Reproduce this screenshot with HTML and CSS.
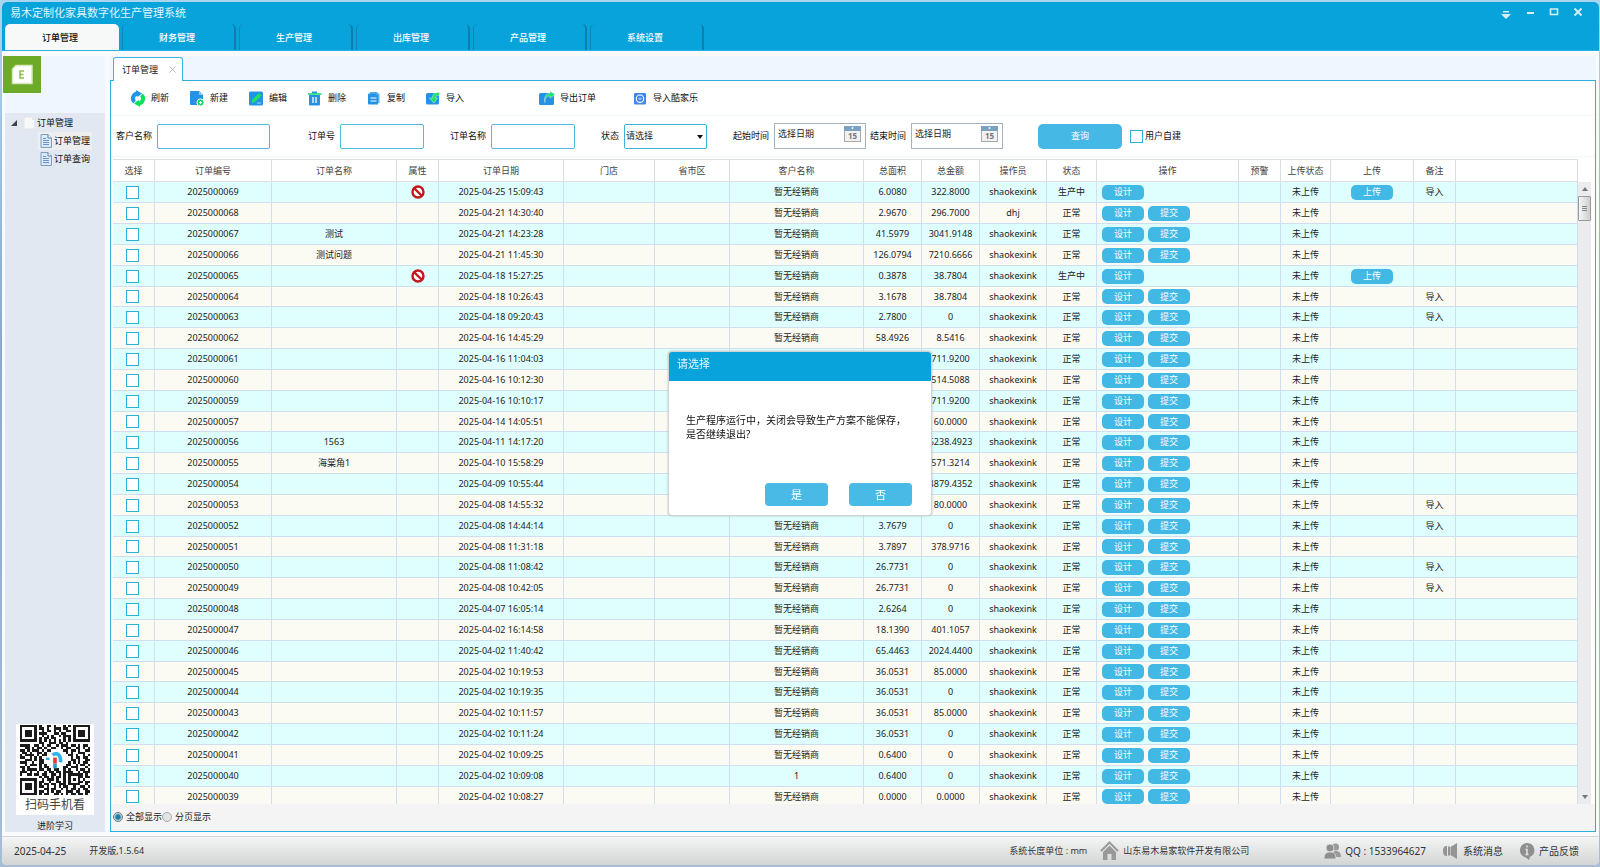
FILE: index.html
```html
<!DOCTYPE html>
<html lang="zh-CN">
<head>
<meta charset="utf-8">
<title>易木定制化家具数字化生产管理系统</title>
<link rel="stylesheet" href="styles.css">
</head>
<body>
<div class="window">
  <header class="top">
    <div class="titlebar">
      <h1 class="title">易木定制化家具数字化生产管理系统</h1>
      <div class="wincontrols">
        <button aria-label="菜单"><svg width="12" height="14" viewBox="0 0 12 14"><path d="M3 5h6v1.500H3zM1 8h10L6 13z" fill="#d5f0fb"/></svg></button>
        <button aria-label="最小化"><svg width="12" height="12" viewBox="0 0 12 12"><path d="M3 6h7v2H3z" fill="#d5f0fb"/></svg></button>
        <button aria-label="最大化"><svg width="12" height="12" viewBox="0 0 12 12"><path d="M2.500 3h7v5.500h-7z" fill="none" stroke="#d5f0fb" stroke-width="1.600"/></svg></button>
        <button aria-label="关闭"><svg width="12" height="12" viewBox="0 0 12 12"><path d="M2.500 2.500l7 7M9.500 2.500l-7 7" stroke="#d5f0fb" stroke-width="1.800"/></svg></button>
      </div>
    </div>
    <nav class="maintabs">
      <button class="maintab active">订单管理</button>
      <button class="maintab">财务管理</button>
      <button class="maintab">生产管理</button>
      <button class="maintab">出库管理</button>
      <button class="maintab">产品管理</button>
      <button class="maintab">系统设置</button>
    </nav>
  </header>

  <div class="work">
    <aside class="side">
      <div class="logo"><svg width="38" height="38" viewBox="0 0 38 38"><path d="M13 9.500h16v18H9.500V13z" fill="#fff" stroke="#d5e8bb" stroke-width="1.500"/><path d="M21 15h-4v7h4M17 18.500h3.500" fill="none" stroke="#8cbf4b" stroke-width="1.500"/></svg></div>
      <div class="sidebody">
        <ul class="tree">
          <li class="root"><svg width="6" height="6" viewBox="0 0 6 6"><path d="M6 0v6H0z" fill="#444"/></svg><svg width="13" height="14" viewBox="0 0 13 14"><path d="M1 1h8l3 3v9H1z" fill="#f8f8f8" stroke="#e2e4e6"/><path d="M9 1v3h3" fill="#e6e6e6"/></svg>订单管理</li>
          <li class="leaf selected"><svg width="12" height="14" viewBox="0 0 12 14"><path d="M1 .5h7l3.500 3.500v9.500H1z" fill="#dbe8f8" stroke="#7f9fb9"/><path d="M8 .5V4h3.500" fill="#fff" stroke="#56809f"/><path d="M3 4.500h3M3 6.500h6M3 8.500h6M3 10.500h6" stroke="#6b96c8"/></svg>订单管理</li>
          <li class="leaf"><svg width="12" height="14" viewBox="0 0 12 14"><path d="M1 .5h7l3.500 3.500v9.500H1z" fill="#dbe8f8" stroke="#7f9fb9"/><path d="M8 .5V4h3.500" fill="#fff" stroke="#56809f"/><path d="M3 4.500h3M3 6.500h6M3 8.500h6M3 10.500h6" stroke="#6b96c8"/></svg>订单查询</li>
        </ul>
        <div class="qrcard">
          <svg class="qr" id="qr" viewBox="0 0 29 29" shape-rendering="crispEdges"></svg>
          <div class="qrtext">扫码手机看</div>
        </div>
        <a class="learn" href="#">进阶学习</a>
      </div>
    </aside>

    <main class="main">
      <div class="pagetabs">
        <div class="pagetab">订单管理<button class="tabclose" aria-label="关闭标签"><svg width="7" height="7" viewBox="0 0 7 7"><path d="M.5.5l6 6M6.500.5l-6 6" stroke="#b9b9b9"/></svg></button></div>
      </div>
      <section class="panel">
        <div class="toolbar">
          <button class="tool"><svg width="16" height="17" viewBox="0 0 16 17"><path d="M8 3.500a5 5 0 0 0-3.500 8.600" fill="none" stroke="#2196e6" stroke-width="4"/><path d="M6 0l6 3.500-5 4z" fill="#2196e6"/><path d="M8 13.500a5 5 0 0 0 3.500-8.600" fill="none" stroke="#0fe05c" stroke-width="4"/><path d="M10 17l-6-3.500 5-4z" fill="#0fe05c"/><path d="M5.500 9l2-1.500 1 2 2-2" fill="none" stroke="#fff" stroke-width="1.500"/></svg>刷新</button>
          <button class="tool"><svg width="16" height="17" viewBox="0 0 16 17"><path d="M2 1h8l4 4v9a1 1 0 0 1-1 1H2a1 1 0 0 1-1-1V2a1 1 0 0 1 1-1z" fill="#2493e6"/><path d="M10 1v4h4z" fill="#8ac7f5"/><circle cx="11.500" cy="12.500" r="3.600" fill="#17dc63" stroke="#fff"/><path d="M11.500 11v3M10 12.500h3" stroke="#fff"/></svg>新建</button>
          <button class="tool"><svg width="16" height="17" viewBox="0 0 16 17"><rect x="1" y="1.500" width="14" height="14" rx="1.500" fill="#2493e6"/><path d="M3.500 13l1-3.500 6.500-6.500 2.500 2.500L7 12z" fill="#19e463"/><path d="M9 13h4" stroke="#9ad0f6"/></svg>编辑</button>
          <button class="tool"><svg width="16" height="17" viewBox="0 0 16 17"><path d="M2 5h11v9.500a1 1 0 0 1-1 1H3a1 1 0 0 1-1-1z" fill="#2493e6"/><path d="M5 1.500h5v2H5z" fill="#2493e6"/><path d="M1 4h13.500" stroke="#12dd66" stroke-width="1.500"/><path d="M6 7v6M9 7v6" stroke="#fff" stroke-width="1.300"/></svg>删除</button>
          <button class="tool"><svg width="16" height="17" viewBox="0 0 16 17"><path d="M4 2h7l2.500 2.500v8.500H4z" fill="#58aeea"/><path d="M3 3.500h6.500L12 6v8.500H3a1 1 0 0 1-1-1v-9a1 1 0 0 1 1-1z" fill="#2493e6"/><path d="M4.500 8h6M4.500 11h6" stroke="#fff" stroke-width="1.200"/></svg>复制</button>
          <button class="tool"><svg width="16" height="17" viewBox="0 0 16 17"><rect x="1" y="3" width="13" height="11.500" rx="1.500" fill="#2493e6"/><path d="M14.500 2.500c-4.500 0-7 1-7 5.500H4.500l4.500 5 3.500-5h-2c0-2 1-3 4-3z" fill="#19e463" stroke="#fff" stroke-width=".4"/></svg>导入</button>
          <button class="tool export"><svg width="16" height="17" viewBox="0 0 16 17"><rect x="0" y="3" width="15" height="12" rx="1.500" fill="#2493e6"/><path d="M6 12.500c0-5 2-6.500 5-6.500v2l5-3.500L11 1v2.500C7 3.500 4.500 7 6 12.500z" fill="#19e463" stroke="#fff" stroke-width=".4"/></svg>导出订单</button>
          <button class="tool kujiale"><svg width="16" height="17" viewBox="0 0 16 17"><rect x="2" y="3" width="12" height="11.500" rx="1" fill="#4287ee"/><circle cx="8" cy="8.700" r="3.700" fill="none" stroke="#fff" stroke-width="1.100"/><path d="M6.500 8l1.500 1.500L9.500 8" fill="none" stroke="#fff"/></svg>导入酷家乐</button>
        </div>
        <form class="filter">
          <label for="cust">客户名称</label><input class="txt wide" id="cust" type="text">
          <label class="gap-a" for="ono">订单号</label><input class="txt" id="ono" type="text">
          <label class="gap-b" for="oname">订单名称</label><input class="txt" id="oname" type="text">
          <label class="gap-b" for="state">状态</label>
          <span class="selwrap"><select id="state"><option>请选择</option></select><svg width="6" height="4" viewBox="0 0 6 4"><path d="M0 0h6L3 4z" fill="#111"/></svg></span>
          <label class="gap-b" for="d1">起始时间</label>
          <span class="date"><input id="d1" type="text" value="选择日期"><svg width="17" height="16" viewBox="0 0 17 16"><rect x=".5" y=".5" width="16" height="15" fill="#f2f2f2" stroke="#a9a9a9"/><path d="M0 0h17v5H0z" fill="#7ca0c0"/><circle cx="8.500" cy="2" r="1" fill="#fff"/><text x="8.500" y="13" text-anchor="middle">15</text></svg></span>
          <label class="gap-c" for="d2">结束时间</label>
          <span class="date"><input id="d2" type="text" value="选择日期"><svg width="17" height="16" viewBox="0 0 17 16"><rect x=".5" y=".5" width="16" height="15" fill="#f2f2f2" stroke="#a9a9a9"/><path d="M0 0h17v5H0z" fill="#7ca0c0"/><circle cx="8.500" cy="2" r="1" fill="#fff"/><text x="8.500" y="13" text-anchor="middle">15</text></svg></span>
          <button class="query" type="button">查询</button>
          <input class="check" id="own" type="checkbox"><label class="own" for="own">用户自建</label>
        </form>
        <div class="gridarea">
          <table class="grid">
            <colgroup><col class="w42"><col class="w117"><col class="w125"><col class="w42"><col class="w125"><col class="w91"><col class="w75"><col class="w134"><col class="w58"><col class="w58"><col class="w67"><col class="w50"><col class="w142"><col class="w42"><col class="w50"><col class="w83"><col class="w42"><col></colgroup>
            <thead><tr><th>选择</th><th>订单编号</th><th>订单名称</th><th>属性</th><th>订单日期</th><th>门店</th><th>省市区</th><th>客户名称</th><th>总面积</th><th>总金额</th><th>操作员</th><th>状态</th><th>操作</th><th>预警</th><th>上传状态</th><th>上传</th><th>备注</th><th></th></tr></thead>
            <tbody id="rows"></tbody>
          </table>
          <div class="scroll">
            <svg class="arrow" width="6" height="4" viewBox="0 0 6 4"><path d="M0 4h6L3 0z" fill="#777"/></svg>
            <div class="thumb"></div>
            <svg class="arrow down" width="6" height="4" viewBox="0 0 6 4"><path d="M0 0h6L3 4z" fill="#777"/></svg>
          </div>
        </div>
        <div class="modes">
          <input type="radio" name="mode" id="m1" checked><label for="m1">全部显示</label>
          <input type="radio" name="mode" id="m2"><label for="m2">分页显示</label>
        </div>
      </section>
    </main>
  </div>

  <footer class="status">
    <span class="num">2025-04-25</span>
    <span class="ver">开发版,1.5.64</span>
    <span class="unit">系统长度单位 : mm</span>
    <span class="item"><svg width="19" height="20" viewBox="0 0 19 20"><path d="M1 10l8.500-8.500L18 10" fill="none" stroke="#9a9a9a" stroke-width="2"/><path d="M3 11l6.500-6.500L16 11v8h-4.500v-6h-4v6H3z" fill="#999"/></svg>山东易木易家软件开发有限公司</span>
    <span class="item qq"><svg width="17" height="16" viewBox="0 0 17 16"><circle cx="11.500" cy="4" r="3.500" fill="#9a9a9a"/><path d="M8 14c0-4 1-6 4-6s5 2 5 6z" fill="#9a9a9a"/><circle cx="6" cy="5" r="4" fill="#8e8e8e" stroke="#eee" stroke-width=".7"/><path d="M0 16c0-5 2-7 6-7s6 2 6 7z" fill="#8e8e8e" stroke="#eee" stroke-width=".7"/></svg><span>QQ : 1533964627</span></span>
    <a class="item msg" href="#"><svg width="17" height="16" viewBox="0 0 17 16"><path d="M5 3v10C2 13 1 11 1 8s1-5 4-5zM6 3.500h2v9H6zM8.500 4L15 0v16l-6.500-4z" fill="#949494"/></svg>系统消息</a>
    <a class="item fb" href="#"><svg width="16" height="17" viewBox="0 0 16 17"><path d="M8 0a7.200 7.200 0 0 1 3 13.800L10 17l-3-2.500A7.300 7.300 0 0 1 8 0z" fill="#8f8f8f"/><path d="M8 2.500v2M6.500 6.500H8v5M6.500 11.500h3" stroke="#e8e8e8" stroke-width="1.400" fill="none"/></svg>产品反馈</a>
  </footer>
</div>

<dialog class="ask" open aria-labelledby="askt">
  <h2 id="askt">请选择</h2>
  <p>生产程序运行中，关闭会导致生产方案不能保存，<br>是否继续退出?</p>
  <div class="askbtns"><button>是</button><button>否</button></div>
</dialog>
<script src="app.js"></script>
</body>
</html>
```
FILE: styles.css
```css
* { box-sizing: border-box; }
body {
  margin: 0;
  height: 100vh;
  overflow: hidden;
  padding: 2px 1px 2px 2px;
  background: linear-gradient(#a9d6ee, #8aa9cc 40%, #a9bdd6);
  font: 9px/12px "Noto Sans", "Noto Sans CJK SC", sans-serif;
  color: #222;
}
button, input, select { font: inherit; color: inherit; margin: 0; }
button { border: 0; padding: 0; background: none; cursor: pointer; }
a { color: inherit; text-decoration: none; }
svg { flex: none; }
.window { display: flex; flex-direction: column; height: 100%; background: #f9fafb; border-radius: 5px; overflow: hidden; }

/* Title bar and main tabs */
.top { background: #09a3dc; border-bottom: 1px solid #2ab2e3; }
.titlebar { display: flex; justify-content: space-between; height: 22px; padding: 0 15px 0 8px; }
.title { margin: 0; padding-top: 3px; font-size: 11px; line-height: 16px; font-weight: 400; color: #e0f5fd; }
.wincontrols { display: flex; gap: 12px; padding-top: 4px; }
.wincontrols button { height: 12px; width: 12px; }
.wincontrols svg { display: block; }
.maintabs { display: flex; gap: 3px; padding-left: 3px; }
.maintab { width: 114px; height: 26px; padding: 2px 3px 0 0; font-weight: 500; color: #fff; border: 1px solid #0995c9; border-width: 0 2px 0 1px; border-color: transparent #0b7ead transparent #0b86b6; border-radius: 5px 5px 0 0; }
.maintab.active { background: #f7f9f9; border-color: transparent; color: #111; }

.work { flex: 1; min-height: 0; display: flex; gap: 5px; padding: 5px 3px 4px 3px; }

/* Sidebar */
.side { width: 100px; flex: none; display: flex; flex-direction: column; background: #eff6ff; }
.logo { width: 38px; height: 37px; margin: 0 0 20px -2px; background: #6caa28; }
.sidebody { flex: 1; display: flex; flex-direction: column; align-items: center; background: #e1e8f2; }
.tree { list-style: none; margin: 0; padding: 1px 0 0; width: 100%; font-size: 9px; }
.tree li { display: flex; align-items: center; gap: 2px; height: 18px; color: #111; }
.tree .root { gap: 6px; padding-left: 6px; }
.tree .root svg + svg { margin-right: -5px; }
.tree .leaf { width: 54px; margin-left: 33px; padding-left: 2px; }
.tree .selected { background: #eeeeef; }
.qrcard { margin-top: auto; width: 78px; background: #fff; text-align: center; padding-top: 1px; }
.qr { display: block; width: 70px; height: 70px; margin: 0 auto; }
.qrtext { font-size: 12px; line-height: 20px; color: #444; }
.learn { padding-top: 5px; }

/* Content panel */
.main { flex: 1; min-width: 0; display: flex; flex-direction: column; background: #eff6ff; }
.pagetabs { display: flex; height: 24px; padding: 1px 0 0 3px; }
.pagetab { display: flex; align-items: center; gap: 11px; width: 70px; height: 24px; padding-left: 8px; border: 1px solid #3db5e0; border-bottom: 0; border-radius: 3px 3px 0 0; background: #fff; position: relative; z-index: 1; }
.tabclose { display: flex; }
.panel { flex: 1; min-height: 0; display: flex; flex-direction: column; border: 1px solid #2bb0de; background: #fff; }
.toolbar { display: flex; align-items: center; height: 35px; padding-left: 19px; border-bottom: 1px solid #eff6fc; flex: none; }
.tool { display: flex; align-items: center; gap: 5px; width: 59px; height: 24px; white-space: nowrap; color: #111; }
.tool svg { width: 16px; }
.export { margin-left: 55px; width: 93px; }
.kujiale { width: 80px; }
.filter { display: flex; align-items: center; height: 41px; margin: 0; padding-left: 5px; border-bottom: 1px solid #eff6fc; flex: none; white-space: nowrap; }
.filter label { margin-right: 5px; color: #111; }
.txt { width: 84px; height: 25px; border: 1px solid #4fb9de; border-radius: 2px; background: #fff; }
.txt.wide { width: 113px; }
.filter .gap-a { margin-left: 38px; }
.filter .gap-b { margin-left: 26px; }
.filter .gap-c { margin-left: 4px; }
.selwrap { position: relative; }
.selwrap select { display: block; width: 83px; height: 25px; padding: 0 1px; appearance: none; border: 1px solid #3db3dc; border-radius: 2px; background: #fff; }
.selwrap svg { position: absolute; right: 4px; top: 11px; pointer-events: none; }
.date { display: flex; align-items: flex-start; width: 92px; height: 26px; padding: 2px 4px 0 3px; border: 1px solid #a8b2be; background: #fff; }
.date input { flex: 1; min-width: 0; height: 15px; padding: 0; border: 0; background: none; }
.date text { font: bold 8px "Noto Sans", sans-serif; fill: #777; }
.query { width: 84px; height: 25px; margin: 0 8px 0 35px; border-radius: 5px; background: #46b8e6; color: #fff; }
.check { appearance: none; display: block; width: 13px; height: 13px; border: 1px solid #2eb0dc; background: #fff; }
.filter .own { margin-left: 2px; }

/* Order grid */
.gridarea { flex: 1; min-height: 0; display: flex; margin: 2px 4px 0 2px; overflow: hidden; }
.grid { flex: 1; table-layout: fixed; border-collapse: separate; border-spacing: 0; height: min-content; width: 0; text-align: center; }
.grid th { height: 23px; padding: 0; border: 1px solid #dcdfe2; border-width: 1px 1px 1px 0; font-weight: 400; color: #444; }
.grid td { height: 21px; padding: 0; border: 1px solid #d0dff0; border-width: 0 1px 1px 0; white-space: nowrap; overflow: hidden; }
.grid tr:nth-child(6n) td { height: 20px; }
.grid tbody tr:nth-child(odd) { background: #dfffff; }
.grid tbody tr:nth-child(even) { background: #fcfbf3; }
.grid .check { margin: 0 auto 0 13px; }
.grid td svg { display: block; margin: 0 auto; }
.ops { display: flex; gap: 4px; padding-left: 5px; }
.pill { display: block; width: 42px; height: 15px; line-height: 14px; border-radius: 5px; background: #42b8e5; color: #fff; }
.upload { margin: 0 auto; }
.w42 { width: 42px; } .w50 { width: 50px; } .w58 { width: 58px; } .w67 { width: 67px; }
.w75 { width: 75px; } .w83 { width: 83px; } .w91 { width: 91px; } .w117 { width: 117px; }
.w125 { width: 125px; } .w134 { width: 134px; } .w142 { width: 142px; }
.scroll { width: 13px; flex: none; display: flex; flex-direction: column; align-items: center; margin-top: 23px; background: #ececee; }
.arrow { margin: 5px 0; }
.arrow.down { margin-top: auto; }
.thumb { width: 13px; height: 25px; border: 1px solid #999; border-radius: 1px; background: repeating-linear-gradient(#888 0 1px, transparent 1px 2px) center / 5px 6px no-repeat, linear-gradient(90deg, #f5f5f5, #cfcfcf); }
.modes { display: flex; align-items: center; height: 27px; padding: 0 0 2px 2px; background: #f4f4f4; flex: none; }
.modes input { appearance: none; width: 10px; height: 10px; border: 1px solid #aaa; border-radius: 50%; background: #e4e4e4; }
.modes input:checked { background: radial-gradient(#1c7fa8 0 2px, #dfe9ee 4px); border-color: #777; }
.modes label { margin-left: 3px; }

/* Status bar */
.status { display: flex; align-items: center; height: 29px; flex: none; padding: 0 20px 0 12px; border-top: 1px solid #d2d4d5; background: linear-gradient(#f4f5f5, #d3d5d5); color: #333; }
.num, .qq, .msg, .fb { font-size: 10px; }
.ver { margin-left: 23px; }
.unit { margin: 0 13px 0 auto; }
.item { display: flex; align-items: center; gap: 4px; }
.qq { margin-left: 75px; }
.msg, .fb { margin-left: 16px; }

/* Confirmation */
.ask { position: fixed; inset: 0; margin: auto; width: 264px; height: max-content; padding: 0; border: 1px solid #d0d4d6; border-radius: 4px; background: #fff; color: #111; z-index: 5; overflow: hidden; box-shadow: 0 0 2px #aaa; }
.ask h2 { margin: 0; height: 29px; padding: 4px 8px; background: #09a3dc; color: #e3f6fd; font-size: 11px; line-height: 16px; font-weight: 400; }
.ask p { margin: 32px 0 0 17px; font-size: 10px; line-height: 14px; white-space: nowrap; }
.askbtns { display: flex; gap: 21px; justify-content: flex-end; padding: 42px 19px 9px; }
.askbtns button { width: 63px; height: 23px; border-radius: 4px; background: #49b9e6; color: #fff; font-size: 11px; }
```
FILE: app.js
```js
// number, name, blocked, date, customer, area, amount, operator, producing, note
const D = "暂无经销商", S = "shaokexink", I = "导入";
const orders = [
  [69, "", 1, "04-25 15:09:43", D, "6.0080", "322.8000", S, 1, I],
  [68, "", 0, "04-21 14:30:40", D, "2.9670", "296.7000", "dhj", 0, ""],
  [67, "测试", 0, "04-21 14:23:28", D, "41.5979", "3041.9148", S, 0, ""],
  [66, "测试问题", 0, "04-21 11:45:30", D, "126.0794", "7210.6666", S, 0, ""],
  [65, "", 1, "04-18 15:27:25", D, "0.3878", "38.7804", S, 1, ""],
  [64, "", 0, "04-18 10:26:43", D, "3.1678", "38.7804", S, 0, I],
  [63, "", 0, "04-18 09:20:43", D, "2.7800", "0", S, 0, I],
  [62, "", 0, "04-16 14:45:29", D, "58.4926", "8.5416", S, 0, ""],
  [61, "", 0, "04-16 11:04:03", "", "", "711.9200", S, 0, ""],
  [60, "", 0, "04-16 10:12:30", "", "", "514.5088", S, 0, ""],
  [59, "", 0, "04-16 10:10:17", "", "", "711.9200", S, 0, ""],
  [57, "", 0, "04-14 14:05:51", "", "", "60.0000", S, 0, ""],
  [56, "1563", 0, "04-11 14:17:20", "", "", "6238.4923", S, 0, ""],
  [55, "海棠角1", 0, "04-10 15:58:29", "", "", "571.3214", S, 0, ""],
  [54, "", 0, "04-09 10:55:44", "", "", "4879.4352", S, 0, ""],
  [53, "", 0, "04-08 14:55:32", "", "", "80.0000", S, 0, I],
  [52, "", 0, "04-08 14:44:14", D, "3.7679", "0", S, 0, I],
  [51, "", 0, "04-08 11:31:18", D, "3.7897", "378.9716", S, 0, ""],
  [50, "", 0, "04-08 11:08:42", D, "26.7731", "0", S, 0, I],
  [49, "", 0, "04-08 10:42:05", D, "26.7731", "0", S, 0, I],
  [48, "", 0, "04-07 16:05:14", D, "2.6264", "0", S, 0, ""],
  [47, "", 0, "04-02 16:14:58", D, "18.1390", "401.1057", S, 0, ""],
  [46, "", 0, "04-02 11:40:42", D, "65.4463", "2024.4400", S, 0, ""],
  [45, "", 0, "04-02 10:19:53", D, "36.0531", "85.0000", S, 0, ""],
  [44, "", 0, "04-02 10:19:35", D, "36.0531", "0", S, 0, ""],
  [43, "", 0, "04-02 10:11:57", D, "36.0531", "85.0000", S, 0, ""],
  [42, "", 0, "04-02 10:11:24", D, "36.0531", "0", S, 0, ""],
  [41, "", 0, "04-02 10:09:25", D, "0.6400", "0", S, 0, ""],
  [40, "", 0, "04-02 10:09:08", "1", "0.6400", "0", S, 0, ""],
  [39, "", 0, "04-02 10:08:27", D, "0.0000", "0.0000", S, 0, ""]
];
const ban = '<svg width="14" height="14" viewBox="0 0 14 14"><circle cx="7" cy="7" r="5.500" fill="#fff" stroke="#c4161c" stroke-width="2.400"/><path d="M3 3l8 8" stroke="#c4161c" stroke-width="2.400"/></svg>';
document.getElementById("rows").innerHTML = orders.map(o => {
  const id = "20250000" + o[0];
  const cells = [
    `<input class="check" type="checkbox" aria-label="${id}">`, id, o[1], o[2] ? ban : "", "2025-" + o[3],
    "", "", o[4], o[5], o[6], o[7], o[8] ? "生产中" : "正常",
    `<div class="ops"><button class="pill">设计</button>${o[8] ? "" : '<button class="pill">提交</button>'}</div>`,
    "", "未上传", o[8] ? '<button class="pill upload">上传</button>' : "", o[9], ""
  ];
  return "<tr>" + cells.map(c => `<td>${c}</td>`).join("") + "</tr>";
}).join("");

// QR modules, one string per row
const qr = [
  "#######.#..##.#...#.#.#######",
  "#.....#.##.#..###.##..#.....#",
  "#.###.#..#.##.#.#..##.#.###.#",
  "#.###.#.###...##.##...#.###.#",
  "#.###.#..#.#.#..#.###.#.###.#",
  "#.....#.#.##.##...#.#.#.....#",
  "#######.#.#.#.#.#.#.#.#######",
  "........##..###.##.#.........",
  "####..##.#.##..#.###.##.#.##.",
  "..##.#.##.#..##..#.##..##.#.#",
  "##.#.###.#.##.....##.##.#..##",
  ".##.#..##.#........#.#..###..",
  "#.####.#.##.........##.#..#.#",
  "##..#.#.#............#.##.##.",
  "..###.#.##...........##.#..##",
  "###..#..##..........#.#.#.##.",
  "..#.###.#.#........##..#.##.#",
  "##.#....#.##......##.###...#.",
  ".#.####.##.##.##..#.#..#.##.#",
  "###.#..#..#.##.##.####..#.###",
  "#..##.##.##..##.#.#.######.#.",
  "........#.##.#.##.#.#...##.##",
  "#######..#.###.#..#.#.#.#.#..",
  "#.....#.##..#..##.#.#...##.##",
  "#.###.#.#.##.##.###.#####..#.",
  "#.###.#.##.#..#.#.##..#..##.#",
  "#.###.#...##.##..#.#.##.#.##.",
  "#.....#.##.#.#.##..###.##..##",
  "#######.#.##..##.#.#.##.##.#."
];
let d = "";
qr.forEach((r, y) => [...r].forEach((c, x) => { if (c === "#") d += `M${x} ${y}h1v1h-1z`; }));
document.getElementById("qr").innerHTML = `<path d="${d}" fill="#1b1b1b"/><g shape-rendering="auto" fill="none" stroke-width="1.500"><path d="M13.500 12.500c2-1.500 3.500 0 3.300 3" stroke="#2bb5ea" /><path d="M11.500 14.500v-1" stroke="#2bb5ea"/><path d="M14.500 13.500v2.500" stroke="#e23b3b"/><path d="M14.500 16v2" stroke="#2b9bd8"/></g>`;
```
